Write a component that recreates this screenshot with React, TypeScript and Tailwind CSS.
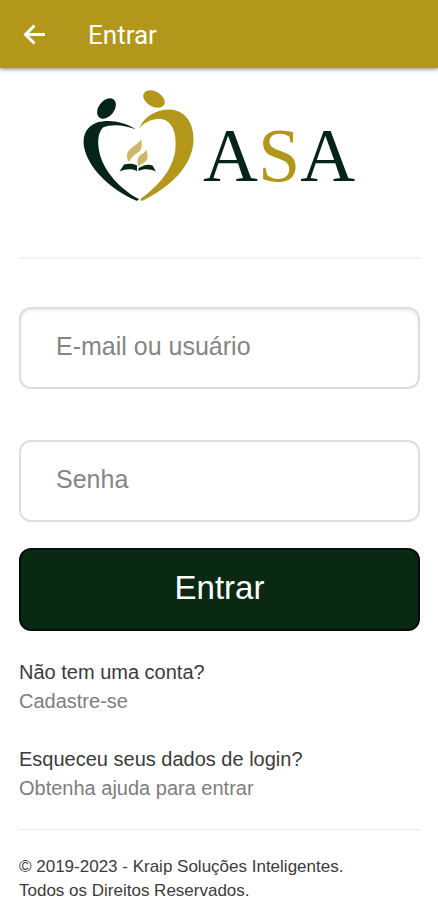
import { useState } from 'react';

const fieldClass =
  'w-full h-[82px] rounded-xl border-2 border-[#dddddd] bg-white px-[35px] pb-1 text-[25px] text-gray-800 placeholder:text-[#858585] focus:outline-none focus:border-[#b3971a]';

function Logo() {
  return (
    <svg
      viewBox="0 0 278 120"
      className="w-[278px] h-[120px]"
      role="img"
      aria-label="ASA"
    >
      {/* left figure */}
      <g fill="#062418">
        <ellipse cx="25.5" cy="22.5" rx="7.8" ry="11.5" transform="rotate(38 25.5 22.5)" />
        <path d="M55 43.5C43 35.5 28 33 16 36.5C4 41 0 52 4 65C10 85 31 104 55 114.500C56 115 57 114.500 58 113C42 105 26 89 20 72C16 60 16 47 22 41.500C31 37.500 44 39 55 43.500Z" />
      </g>
      {/* right figure */}
      <g fill="#b3971a">
        <ellipse cx="73" cy="13" rx="11.6" ry="7.6" transform="rotate(30 73 13)" />
        <path d="M58 43C62 31 75 23.500 89 23.500C103 24 113 36 112.500 54C112 80 89 101 62 114.500C60.500 115.500 59.500 114.500 59.500 113C77 100 93 83 94.500 62C96 42 88 32 77 33C69 33.500 62 37 58 43Z" />
      </g>
      {/* flame over the book */}
      <g fill="#cdb76a">
        <path d="M60 53C61 58 61.500 61 59 64.500C56 68 50 70 48.500 76C45 73 45.500 68 47.500 65C51 60 58 58 60 53Z" />
        <path d="M65 63.500C67 68 67.500 72 65 75C62 78 59 78 57.500 81C56 77 56 73 58 70.500C60.500 67.500 64 67 65 63.500Z" />
      </g>
      <g fill="#062418">
        <path d="M38.500 85.500L43 78.500C48 77 53 77.500 56 79.500V85C51 82.500 45 83 38.500 85.500Z" />
        <path d="M57.500 85V82L63 79.500C66 78.500 69 78.500 71.500 79.500L75 85.500C69 83 63 82.500 57.500 85Z" />
      </g>
      <text
        x="122"
        y="95"
        fontSize="76"
        fill="#062418"
        className="font-['Liberation_Serif',serif]"
      >
        A<tspan fill="#b3971a">S</tspan>A
      </text>
    </svg>
  );
}

export default function App() {
  const [user, setUser] = useState('');
  const [password, setPassword] = useState('');

  return (
    <div className="min-h-screen bg-white font-['Liberation_Sans',Arial,sans-serif] text-[#3b3b3b]">
      <header className="flex h-[68px] items-center gap-10 bg-[#b3971a] px-[22px] pt-[2px] text-white shadow-[0_1px_4px_rgba(0,0,0,0.5)]">
        <button type="button" aria-label="Voltar" className="size-[26px]">
          <svg viewBox="0 0 26 26" fill="none" stroke="currentColor" strokeWidth="3">
            <path d="M23 12.500H4M12.500 3.500L3.500 12.500L12.500 21.500" />
          </svg>
        </button>
        <h1 className="font-['Roboto',sans-serif] text-[26px] leading-8">Entrar</h1>
      </header>

      <main className="pl-[19px] pr-[18px]">
        {/* Logo */}
        <div className="flex justify-center border-b-2 border-[#f3f3f3] pt-[18px] pb-[51px]">
          <Logo />
        </div>

        <form className="pt-12" onSubmit={(e) => e.preventDefault()}>
          <div className="flex flex-col gap-[51px]">
            <input
              type="text"
              aria-label="E-mail ou usuário"
              placeholder="E-mail ou usuário"
              value={user}
              onChange={(e) => setUser(e.target.value)}
              className={`${fieldClass} shadow-[inset_0_2px_3px_rgba(0,0,0,0.08)]`}
            />
            <input
              type="password"
              aria-label="Senha"
              placeholder="Senha"
              value={password}
              onChange={(e) => setPassword(e.target.value)}
              className={fieldClass}
            />
          </div>
          <button
            type="submit"
            className="mt-[26px] h-[83px] w-full rounded-xl border-2 border-[#020d10] bg-[#0a2912] pb-1 text-[33px] text-white"
          >
            Entrar
          </button>
        </form>

        {/* Links */}
        <div className="flex flex-col gap-[29px] pt-[27px] pb-[26px] text-[20px] leading-[29px]">
          <div>
            <p>Não tem uma conta?</p>
            <a href="#cadastro" className="text-[#7d7d7d]">Cadastre-se</a>
          </div>
          <div>
            <p>Esqueceu seus dados de login?</p>
            <a href="#ajuda" className="text-[#7d7d7d]">Obtenha ajuda para entrar</a>
          </div>
        </div>

        <footer className="border-t border-[#e8e8e8] pt-[25px] text-[17px] leading-6">
          <p>© 2019-2023 - Kraip Soluções Inteligentes.</p>
          <p>Todos os Direitos Reservados.</p>
        </footer>
      </main>
    </div>
  );
}
